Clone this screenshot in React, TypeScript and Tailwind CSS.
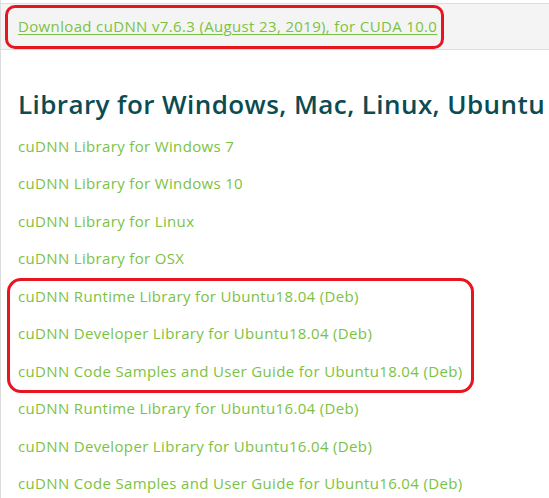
import React from "react";

const links = [
  "cuDNN Library for Windows 7",
  "cuDNN Library for Windows 10",
  "cuDNN Library for Linux",
  "cuDNN Library for OSX",
  "cuDNN Runtime Library for Ubuntu18.04 (Deb)",
  "cuDNN Developer Library for Ubuntu18.04 (Deb)",
  "cuDNN Code Samples and User Guide for Ubuntu18.04 (Deb)",
  "cuDNN Runtime Library for Ubuntu16.04 (Deb)",
  "cuDNN Developer Library for Ubuntu16.04 (Deb)",
  "cuDNN Code Samples and User Guide for Ubuntu16.04 (Deb)",
];

export default function App() {
  return (
    <div
      className="relative w-[549px] h-[498px] overflow-hidden bg-white"
      style={{ fontFamily: "'Open Sans', Roboto, 'Liberation Sans', sans-serif" }}
    >
      <div className="h-full border-l border-[#dcdcdc] pt-[3px]">
        <div className="h-[47px] bg-[#f4f4f4] border-y border-[#dedede] flex items-center pl-[17px]">
          <a className="text-[15px] tracking-[0.35px] text-[#7cc242] underline decoration-[#7cc242] underline-offset-2">
            Download cuDNN v7.6.3 (August 23, 2019), for CUDA 10.0
          </a>
        </div>
        <h2 className="mt-[38px] pl-[17px] text-[26px] leading-[32px] font-semibold tracking-[0.42px] text-[#0b4b52] whitespace-nowrap">
          Library for Windows, Mac, Linux, Ubuntu
        </h2>
        <ul className="mt-[7px] pl-[17px] flex flex-col">
          {links.map((l) => (
            <li key={l} className="h-[37.5px] flex items-center text-[15px] tracking-[0.34px] text-[#7cc242] whitespace-nowrap">
              {l}
            </li>
          ))}
        </ul>
      </div>
      <div className="absolute left-[5px] top-[5px] w-[439px] h-[44px] border-[3px] border-[#e8141e] rounded-[10px]" />
      <div className="absolute left-[7px] top-[278px] w-[467px] h-[115px] border-[3px] border-[#e8141e] rounded-[14px]" />
    </div>
  );
}
